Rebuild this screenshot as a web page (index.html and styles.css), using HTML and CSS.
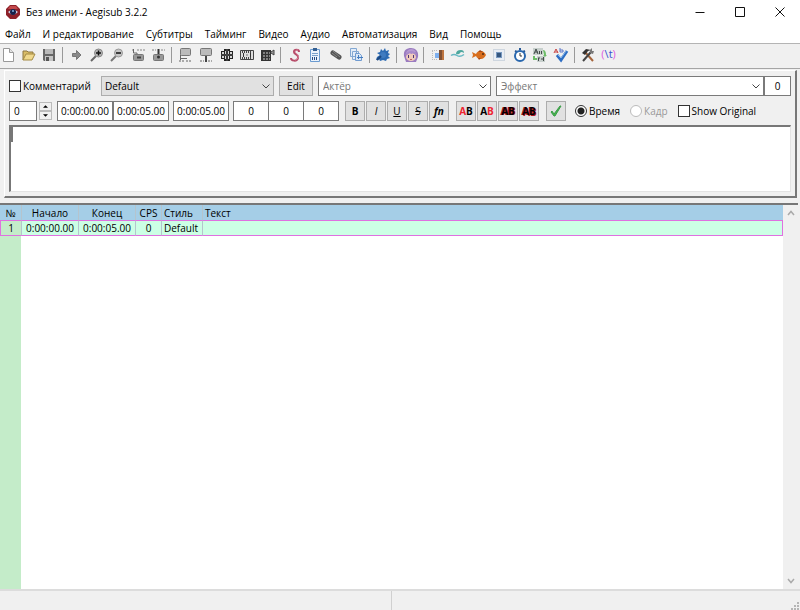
FILE: index.html
```html
<!DOCTYPE html>
<html lang="ru">
<head>
<meta charset="utf-8">
<title>Без имени - Aegisub 3.2.2</title>
<link rel="stylesheet" href="styles.css">
</head>
<body>
<header class="titlebar">
  <svg class="logo" viewBox="0 0 14 14"><path d="M4 0h6l4 4v6l-4 4H4l-4-4V4z" fill="#8d2029"/><path d="M4 1h6l2 3H2z" fill="#c2484b"/><path d="M2 7q5-5 10 0-5 5-10 0z" fill="#c9cfe4"/><circle cx="7" cy="7" r="3" fill="#17204a"/><circle cx="7" cy="6" r="1" fill="#7fb2e0"/></svg>
  <h1 class="title">Без имени - Aegisub 3.2.2</h1>
  <div class="window-buttons">
    <button aria-label="Свернуть"><svg viewBox="0 0 10 10"><path d="M.5 5.500h9" stroke="#111" fill="none"/></svg></button>
    <button aria-label="Развернуть"><svg viewBox="0 0 10 10"><path d="M.5.5h9v9h-9z" stroke="#111" fill="none"/></svg></button>
    <button aria-label="Закрыть"><svg viewBox="0 0 10 10"><path d="M.5.5l9 9M9.500.5l-9 9" stroke="#111" fill="none"/></svg></button>
  </div>
</header>
<nav class="menu">
  <button>Файл</button><button>И редактирование</button><button>Субтитры</button><button>Тайминг</button><button>Видео</button><button>Аудио</button><button>Автоматизация</button><button>Вид</button><button>Помощь</button>
</nav>
<div class="toolbar" role="toolbar">
  <div class="tools">
    <button aria-label="Новый"><svg viewBox="0 0 16 16"><path d="M3.500 1.500h6l4 4v9h-10z" fill="#fff" stroke="#999"/><path d="M9.500 1.500v4h4" fill="#e4e4e4" stroke="#999"/></svg></button>
    <button aria-label="Открыть"><svg viewBox="0 0 16 16"><path d="M2 13V4h4l1 1h5v3" fill="#d9bd68" stroke="#8d7740"/><path d="M2 13l3-6h9l-3 6z" fill="#f0d98d" stroke="#a38a45"/></svg></button>
    <button aria-label="Сохранить"><svg viewBox="0 0 16 16"><path d="M2 2h12v12H3l-1-1z" fill="#666"/><path d="M4 2h8v5H4z" fill="#b9b9b9"/><path d="M4 9h8v5H4z" fill="#c5c5c5"/><path d="M5 10h3v4H5z" fill="#555"/></svg></button>
    <i></i>
    <button aria-label="Перейти"><svg viewBox="0 0 16 16"><path d="M4.500 6.500h4v-3l4.500 4.500-4.500 4.500v-3h-4z" fill="#8a8a8a" stroke="#777"/></svg></button>
    <button aria-label="Увеличить"><svg viewBox="0 0 16 16"><path d="M2 14l5-5" stroke="#666" stroke-width="2"/><circle cx="9.500" cy="6" r="4" fill="#b5b5b5" stroke="#888"/><path d="M7 6h5M9.500 3.500v5" stroke="#111" stroke-width="1.500"/></svg></button>
    <button aria-label="Уменьшить"><svg viewBox="0 0 16 16"><path d="M2 14l5-5" stroke="#777" stroke-width="2"/><circle cx="9.500" cy="6" r="4" fill="#c5c5c5" stroke="#999"/><path d="M7 6h5" stroke="#111" stroke-width="1.500"/></svg></button>
    <button aria-label="Начало видео"><svg viewBox="0 0 16 16"><path d="M2 3h3M7 3h8" stroke="#bbb" stroke-width="2" stroke-dasharray="2 1"/><path d="M3.500 2v4H7v2" stroke="#666" fill="none"/><rect x="3.500" y="7.500" width="10" height="6" rx="1" fill="#999" stroke="#777"/><path d="M7 10.500h4" stroke="#444" stroke-width="2"/></svg></button>
    <button aria-label="Конец видео"><svg viewBox="0 0 16 16"><path d="M2 3h4M11 3h4" stroke="#bbb" stroke-width="2" stroke-dasharray="2 1"/><path d="M8.500 2v5" stroke="#333" stroke-width="2"/><rect x="3.500" y="7.500" width="10" height="6" rx="1" fill="#999" stroke="#777"/><circle cx="8.500" cy="10" r="1.500" fill="#333"/></svg></button>
    <i></i>
    <button aria-label="Начало по видео"><svg viewBox="0 0 16 16"><rect x="3.500" y="1.500" width="10" height="7" rx="1" fill="#bbb" stroke="#777"/><path d="M3.500 8v6M4 11.500h6" stroke="#666"/><path d="M2 14h5M9 14h6" stroke="#aaa" stroke-width="2" stroke-dasharray="2 1"/></svg></button>
    <button aria-label="Конец по видео"><svg viewBox="0 0 16 16"><rect x="2.500" y="1.500" width="11" height="7" rx="1" fill="#bbb" stroke="#777"/><path d="M8 9v6" stroke="#444" stroke-width="2"/><path d="M2 14h4M10 14h4" stroke="#aaa" stroke-width="2" stroke-dasharray="2 1"/></svg></button>
    <button aria-label="Ключевой кадр"><svg viewBox="0 0 16 16"><path d="M5 2h6v12H5zM2 4h12v8H2z" fill="#222"/><path d="M3 5h2v2H3zM3 9h2v2H3zM11 5h2v2h-2zM11 9h2v2h-2zM6 4h1v3H6zM9 4h1v3H9zM6 9h1v3H6zM9 9h1v3H9z" fill="#d5d5d5"/><path d="M2 8h12M8 2v12" stroke="#555"/></svg></button>
    <button aria-label="Сцена"><svg viewBox="0 0 16 16"><path d="M1.500 3.500h13v9h-13z" fill="#ddd" stroke="#444"/><path d="M3 5h10M3 11h10" stroke="#444" stroke-width="2" stroke-dasharray="1 1"/><path d="M4.500 6v4M11.500 6v4" stroke="#333"/><path d="M7 8h2" stroke="#777"/></svg></button>
    <button aria-label="Сдвиг"><svg viewBox="0 0 16 16"><path d="M1 3h10v11H1z" fill="#333"/><path d="M3 6h7M3 9h7M3 12h7" stroke="#ccc" stroke-dasharray="2 1"/><path d="M11 5l3-2v5l-3-2" stroke="#444" fill="#999"/></svg></button>
    <i></i>
    <button aria-label="Стили"><svg viewBox="0 0 16 16"><path d="M12 5C12 2 7 2 7 5s5 2 4 6-7 3-7 0" fill="none" stroke="#b64b68" stroke-width="2"/><path d="M11 3C7 3 8 6 10 7s2 5-2 6" fill="none" stroke="#dc8da2"/></svg></button>
    <button aria-label="Свойства"><svg viewBox="0 0 16 16"><path d="M3.500 2.500h9v12h-9z" fill="#eaf2fb" stroke="#6b9bd0"/><path d="M6 1h4v3H6z" fill="#345f91"/><path d="M5 6.500h6M5 8.500h6" stroke="#79a0cb"/><path d="M5 11.500h6" stroke="#254b83" stroke-width="3" stroke-dasharray="1 1"/></svg></button>
    <button aria-label="Вложения"><svg viewBox="0 0 16 16"><path d="M5 6l6 4" stroke="#555" stroke-width="5" stroke-linecap="round"/><path d="M5 4l7 6M4 6l5 4" stroke="#888"/></svg></button>
    <button aria-label="Шрифты"><svg viewBox="0 0 16 16"><path d="M2.500 1.500h6v8h-6zM4.500 4.500h6v8h-6z" fill="#e4edf8" stroke="#83a8d3"/><path d="M7.500 6.500h4l2 2v5h-6z" fill="#d9e7f6" stroke="#709bd0"/><path d="M9 10.500h6M10.500 8v4" stroke="#447cc0"/></svg></button>
    <i></i>
    <button aria-label="Автоматизация"><svg viewBox="0 0 16 16"><path d="M6 2l2 2 2-3 1 3 3-1-1 3 2 1-2 2 2 2-3 1-1 2-3-1-3 1-1-2-3 1 1-3 3-2-3-2 3-1z" fill="#2d6bb3"/><ellipse cx="8" cy="8" rx="3" ry="3" fill="#3f7bc0"/><path d="M2 13l4-4" stroke="#1b477f" stroke-width="2"/></svg></button>
    <i></i>
    <button aria-label="Помощник"><svg viewBox="0 0 16 16"><path d="M1 9C0 3 4 1 8 1s8 3 7 9l-2 5H3z" fill="#9b7cc0"/><path d="M3 6c2-5 8-5 10-1l-4 2-1-3-1 4z" fill="#b79bd2"/><ellipse cx="8" cy="10" rx="5" ry="4" fill="#f1cbbb"/><path d="M2 8q2-4 6-4 4 0 6 4-3-1-4-2-2 2-3 0-2 2-5 2z" fill="#a98bcb"/><path d="M5.500 8v3M10.500 8v3" stroke="#4b3979" stroke-width="1"/><path d="M7 12.500h2" stroke="#b66"/></svg></button>
    <i></i>
    <button aria-label="Сдвинуть время"><svg viewBox="0 0 16 16"><path d="M2 3.500h6M2 12.500h6M2.500 4v8" stroke="#bbb" stroke-dasharray="1 1"/><path d="M5 6h4v5H5z" fill="#7fb0ee"/><path d="M9 3h3v10H9z" fill="#805034"/><path d="M12 3h2v10h-2z" fill="#bd7440"/></svg></button>
    <button aria-label="Коррекция"><svg viewBox="0 0 16 16"><path d="M1 8.500q3-2 6 0t7-1" fill="none" stroke="#68b8c3" stroke-width="1.500"/><path d="M6 7q0-4 5-4 3 0 3 3-3-2-4 0t-4 1z" fill="#4da79e"/></svg></button>
    <button aria-label="Кара"><svg viewBox="0 0 16 16"><path d="M1 5l4 2q1-3 5-3 3 0 5 4-2 4-5 4-4 0-5-3l-4 2 1-3z" fill="#d86e1e"/><path d="M7 5l2-2 3 2M7 11l1 2 2-2" fill="#a94713"/><circle cx="12" cy="7" r="1" fill="#542b12"/></svg></button>
    <button aria-label="Разрешение"><svg viewBox="0 0 16 16"><path d="M2.500 2.500h11v11h-11z" fill="#e9eef5" stroke="#b0bdcd" stroke-dasharray="1 1"/><path d="M5 5h6v6H5z" fill="#7898c0"/><path d="M6 6h4v4H6z" fill="#36577f"/></svg></button>
    <button aria-label="Постобработка"><svg viewBox="0 0 16 16"><path d="M8 1v2M3 4l2 1M13 4l-2 1" stroke="#275897" stroke-width="2"/><circle cx="8" cy="9" r="5" fill="#fff" stroke="#2967ae" stroke-width="2"/><path d="M8 6v3h2" fill="none" stroke="#333"/></svg></button>
    <button aria-label="Перевод"><svg viewBox="0 0 16 16"><path d="M1 1h10v7H1zM5 9h8v6H5z" fill="#c8d0cd"/><path d="M2 7l2-5 2 5M3 5h3M7.500 4v3M9.500 4v3M6 11h2M6.500 11v3M9 12h3M11.500 10v4" fill="none" stroke="#424b49"/><path d="M11 3q3 0 3 5l1 0-2 2-2-2h1" fill="#6dbd69"/><path d="M2 9v3h3" fill="none" stroke="#6dbd69" stroke-width="2"/></svg></button>
    <button aria-label="Орфография"><svg viewBox="0 0 16 16"><path d="M1 6l2-4 2 4M2 5h3" fill="none" stroke="#c74141"/><path d="M7 1v4h3V3H7" fill="none" stroke="#5a76c9"/><path d="M4 8l4 5 6-9" fill="none" stroke="#2c6dc4" stroke-width="3"/><path d="M5 8l3 3 5-7" fill="none" stroke="#8ab8e9"/></svg></button>
    <i></i>
    <button aria-label="Настройки"><svg viewBox="0 0 16 16"><path d="M5 5l8 9" stroke="#a5643b" stroke-width="2"/><path d="M3 14l8-9" stroke="#444" stroke-width="2"/><path d="M2 6l4-4 5 1-3 1-3 4z" fill="#333"/><path d="M10 6V3l2-2v3h2l-1 3z" fill="#777"/></svg></button>
    <button class="tag-tool" aria-label="Теги"><span>(</span><b>\t</b><span>)</span></button>
  </div>
</div>
<main>
  <section class="editor">
    <div class="row">
      <label class="comment"><input type="checkbox">Комментарий</label>
      <div class="combo style"><select aria-label="Стиль"><option>Default</option></select><svg viewBox="0 0 8 5"><path d="M.5.5L4 4 7.500.5" fill="none" stroke="#444"/></svg></div>
      <button class="btn edit">Edit</button>
      <div class="combo actor"><input placeholder="Актёр" aria-label="Актёр"><svg viewBox="0 0 8 5"><path d="M.5.5L4 4 7.500.5" fill="none" stroke="#444"/></svg></div>
      <div class="effects"><div class="combo"><input placeholder="Эффект" aria-label="Эффект"><svg viewBox="0 0 8 5"><path d="M.5.5L4 4 7.500.5" fill="none" stroke="#444"/></svg></div><input class="field count" value="0" aria-label="Символов"></div>
    </div>
    <div class="row second">
      <div class="layer"><input class="field" value="0" aria-label="Слой"><div class="spin"><button aria-label="Больше"><svg viewBox="0 0 6 3"><path d="M0 3l3-3 3 3z"/></svg></button><button aria-label="Меньше"><svg viewBox="0 0 6 3"><path d="M0 0l3 3 3-3z"/></svg></button></div></div>
      <div class="joined times"><input class="field" value="0:00:00.00" aria-label="Начало"><input class="field" value="0:00:05.00" aria-label="Конец"></div>
      <div class="joined times"><input class="field" value="0:00:05.00" aria-label="Длительность"></div>
      <div class="joined margins"><input class="field" value="0" aria-label="Слева"><input class="field" value="0" aria-label="Справа"><input class="field" value="0" aria-label="Вертикально"></div>
      <div class="formats"><button class="btn"><b>B</b></button><button class="btn"><em>I</em></button><button class="btn"><u>U</u></button><button class="btn"><s>S</s></button><button class="btn"><em class="fn">fn</em></button></div>
      <div class="formats colors"><button class="btn"><b class="red">A</b><b>B</b></button><button class="btn"><b>A</b><b class="red">B</b></button><button class="btn outline"><b>AB</b></button><button class="btn shadow"><b>AB</b></button></div>
      <div class="formats"><button class="btn" aria-label="Применить"><svg viewBox="0 0 14 14"><path d="M2 8l1-1 2 3 6-8 1 0-6 10H5z" fill="#45b54b" stroke="#3b9d48"/></svg></button></div>
      <div class="modes">
        <label><input type="radio" name="mode" checked>Время</label>
        <label class="disabled"><input type="radio" name="mode" disabled>Кадр</label>
        <label><input type="checkbox">Show Original</label>
      </div>
    </div>
    <div class="text-wrap"><textarea aria-label="Текст субтитра"></textarea></div>
  </section>
  <section class="grid">
    <div class="sheet">
      <table>
        <thead><tr><th class="num">№</th><th class="time">Начало</th><th class="time">Конец</th><th class="cps">CPS</th><th class="sty">Стиль</th><th class="txt">Текст</th></tr></thead>
        <tbody><tr><td class="num">1</td><td>0:00:00.00</td><td>0:00:05.00</td><td>0</td><td class="sty">Default</td><td></td></tr></tbody>
      </table>
      <div class="gutter"></div>
    </div>
    <div class="scroll"><button aria-label="Вверх"><svg viewBox="0 0 8 6"><path d="M1 5l3-3.500L7 5" fill="none" stroke="#aaa" stroke-width="1.500"/></svg></button><button aria-label="Вниз"><svg viewBox="0 0 8 6"><path d="M1 1l3 3.500L7 1" fill="none" stroke="#aaa" stroke-width="1.500"/></svg></button></div>
  </section>
</main>
<footer class="status"><div></div><div></div><svg viewBox="0 0 9 9"><path d="M6 1h2v2H6zM3 4h2v2H3zM6 4h2v2H6zM0 7h2v2H0zM3 7h2v2H3zM6 7h2v2H6z" fill="#b5b5b5"/></svg></footer>
</body>
</html>
```
FILE: styles.css
```css
* { box-sizing: border-box; }
body {
  margin: 0;
  min-height: 100vh;
  display: flex;
  flex-direction: column;
  background: #f0f0f0;
  color: #000;
  font: 10px/14px "Open Sans", "Noto Sans", sans-serif;
}
button, input, select, textarea { font: inherit; color: inherit; margin: 0; padding: 0; border-radius: 0; }
button { border: 0; background: none; }
svg { display: block; }

.titlebar { display: flex; align-items: center; height: 24px; background: #fff; padding-left: 6px; }
.logo { width: 14px; height: 14px; }
.title { flex: 1; margin: 0 0 0 6px; font-size: 10px; font-weight: 400; }
.window-buttons { display: flex; }
.window-buttons button { width: 40px; height: 24px; display: grid; place-items: center; }
.window-buttons svg { width: 10px; height: 10px; }

.menu { display: flex; align-items: center; gap: 12px; height: 20px; padding: 0 5px; background: #fff; border-bottom: 1px solid #b4b4b4; }

.toolbar { height: 25px; border-bottom: 1px solid #a5a5a5; }
.tools { display: flex; justify-content: space-between; align-items: center; width: 617px; height: 22px; }
.tools button, .tools svg { width: 16px; height: 16px; }
.tools i { width: 2px; height: 16px; border-left: 1px solid #999; }
.tools .tag-tool { display: flex; justify-content: center; color: #e05be0; font-size: 11px; line-height: 14px; }
.tag-tool b { color: #3c4ed0; font-weight: 400; }

main { flex: 1; display: flex; flex-direction: column; }
.editor { margin: 1px 3px 5px 4px; padding: 5px 4px 4px; border: 1px solid #fff; border-right: 2px solid #777; border-bottom: 2px solid #777; }
.row { display: flex; align-items: center; height: 20px; }
.second { margin-top: 5px; }
label { display: flex; align-items: center; gap: 2px; white-space: nowrap; }
input[type=checkbox] { appearance: none; width: 12px; height: 12px; border: 1px solid #333; background: #fff; }
input[type=radio] { appearance: none; width: 12px; height: 12px; border: 1px solid #333; border-radius: 50%; background: #fff; }
input[type=radio]:checked { background: radial-gradient(circle, #222 3px, #fff 4px); }
input[type=radio]:disabled { border-color: #bbb; }
.disabled { color: #999; }
.comment { width: 92px; }
.combo { position: relative; flex: 1; height: 20px; }
.combo select, .combo input { appearance: none; width: 100%; height: 20px; padding: 0 4px; border: 1px solid #7a7a7a; background: #fff; outline: 0; display: block; }
.combo select { background: #e1e1e1; border-color: #adadad; padding: 0 3px; }
.combo svg { position: absolute; right: 4px; top: 8px; width: 8px; height: 5px; pointer-events: none; }
::placeholder { color: #777; opacity: 1; }
.style, .actor { flex: 173 1 0; }
.effects { flex: 295 1 0; display: flex; margin-left: 5px; }
.btn { border: 1px solid #adadad; background: #e1e1e1; height: 20px; display: grid; place-items: center; }
.edit { width: 34px; margin: 0 5px; }
.field { height: 20px; border: 1px solid #7a7a7a; background: #fff; text-align: center; outline: 0; }
.count { width: 27px; }
.layer { display: flex; margin-right: 5px; }
.layer .field { width: 28px; text-align: left; padding-left: 4px; }
.spin { display: flex; flex-direction: column; justify-content: space-between; margin-left: 2px; padding: 1px 0; }
.spin button { width: 13px; height: 9px; border: 1px solid #bbb; display: grid; place-items: center; }
.spin svg { width: 5px; height: 3px; }
.joined { display: flex; margin-right: 4px; }
.times .field { width: 56px; }
.margins .field { width: 36px; margin-right: -1px; }
.margins { margin-right: 7px; }
.formats { display: flex; gap: 1px; margin-right: 7px; }
.formats .btn { width: 20px; height: 20px; display: flex; align-items: center; justify-content: center; }
.formats svg { width: 14px; height: 14px; }
.fn { font-weight: 700; }
.red { color: #ee2430; }
.outline { text-shadow: 1px 0 #b01018, -1px 0 #b01018; }
.shadow { text-shadow: 1px 1px #b01018, -1px 0 #b01018; }
.modes { display: flex; gap: 10px; margin-left: 2px; }
.text-wrap { margin-top: 4px; border: 1px solid #e3e3e3; border-top: 2px solid #777; border-left: 2px solid #777; background: #fff; }
textarea { display: block; width: 100%; height: 64px; border: 0; outline: 0; resize: none; padding: 0 3px; background: linear-gradient(#777, #777) 0 0 / 2px 15px no-repeat; }

.grid { flex: 1; display: flex; margin-right: 2px; border-top: 2px solid #777; background: #fff; }
.sheet { flex: 1; display: flex; flex-direction: column; }
table { width: 100%; border-collapse: separate; border-spacing: 0; table-layout: fixed; color: #000; }
th, td { height: 15px; padding: 0; font-weight: 400; line-height: 14px; text-align: center; border-right: 1px solid #b5c4cd; }
th { background: #a5cee7; }
td { height: 16px; background: #ccffe5; border-top: 1px solid #e070e0; border-bottom: 1px solid #e070e0; }
.num { width: 22px; }
.time { width: 57px; }
.cps { width: 26px; }
.sty { width: 41px; text-align: left; padding-left: 2px; }
th.txt { text-align: left; padding-left: 2px; }
th:last-child { border-right: 0; }
td:last-child { border-right: 1px solid #e070e0; }
td.num { background: #c4ecc9; border-left: 1px solid #e070e0; }
.gutter { flex: 1; width: 21px; background: #c4ecc9; }
.scroll { width: 15px; background: #f0f0f0; display: flex; flex-direction: column; justify-content: space-between; }
.scroll button { width: 15px; height: 16px; display: grid; place-items: center; }
.scroll svg { width: 8px; height: 6px; }

.status { display: flex; align-items: flex-end; height: 21px; border-top: 2px solid #dcdcdc; }
.status div { flex: 1; align-self: stretch; }
.status div:first-child { border-right: 1px solid #d0d0d0; }
.status div:nth-child(2) { margin-right: 9px; }
.status svg { width: 9px; height: 9px; }
```
